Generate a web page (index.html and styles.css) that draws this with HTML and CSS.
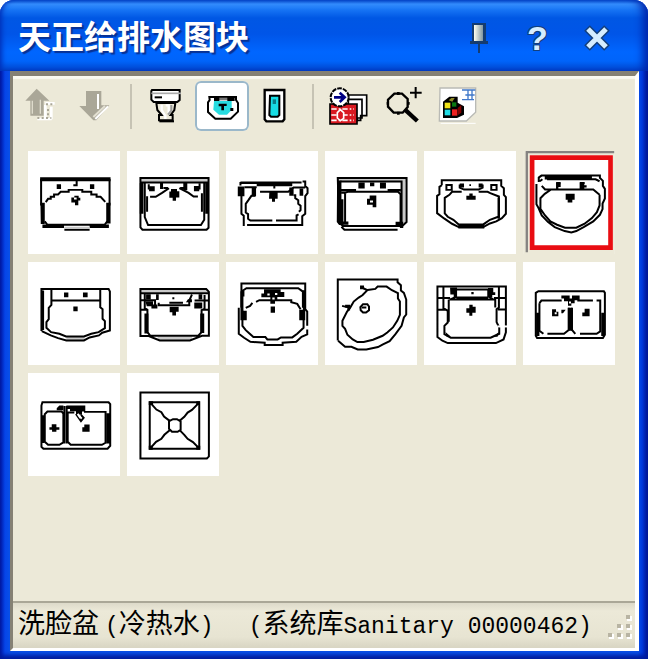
FILE: index.html
```html
<!DOCTYPE html>
<html lang="zh-CN">
<head>
<meta charset="utf-8">
<title>天正给排水图块</title>
<link rel="stylesheet" href="styles.css">
</head>
<body>
<div class="window">
  <header class="titlebar">
    <h1>天正给排水图块</h1>
    <button class="caption" aria-label="固定"><svg width="20" height="32" viewBox="0 0 20 32"><defs><linearGradient id="pin"><stop offset="0" stop-color="#fffff0"/><stop offset="1" stop-color="#8197a2"/></linearGradient></defs><path d="M3 1H17V19H19V22H1V19H3Z" fill="#153c70"/><path d="M5 3H14V19H5Z" fill="url(#pin)"/><path d="M10 22V31" stroke="#153c70" stroke-width="2"/></svg></button>
    <button class="caption help" aria-label="帮助">?</button>
    <button class="caption" aria-label="关闭"><svg width="28" height="28" viewBox="0 0 28 28"><path d="M4 4L24 24M24 4L4 24" stroke="#123f7d" stroke-width="8"/><path d="M5 5L23 23M23 5L5 23" stroke="#d5edff" stroke-width="5"/></svg></button>
  </header>
  <main class="client">
    <div class="toolbar" role="toolbar">
      <button class="tool" aria-label="上移" disabled><svg viewBox="39 243 162 150"><path d="M110 266L148 302H131V347H91V302H76Z" fill="#aaa798"/><path d="M97 302V341M121 299V341" stroke="#dedbcc" stroke-width="4"/><path d="M136 310H164M136 358V315M112 357H155M154 320V358" fill="none" stroke="#fff" stroke-width="8"/><path d="M138 313H160M112 354H154M144 327V354" fill="none" stroke="#aaa798" stroke-width="6" stroke-dasharray="6 7"/></svg></button>
      <button class="tool" aria-label="下移" disabled><svg viewBox="201 243 162 150"><path d="M258 273H304V316H328L289 361H280L238 318H258Z" fill="#aaa798"/><path d="M294 282V327M324 319L286 357" fill="none" stroke="#fff" stroke-width="6"/><path d="M280 351L315 318" stroke="#e3e0d2" stroke-width="6"/></svg></button>
      <span class="separator"></span>
      <button class="tool" aria-label="大便器"><svg viewBox="423 243 162 150"><path d="M456 270H539V300L532 306H461L454 299V273Z" fill="#fff" stroke="#000" stroke-width="6"/><path d="M454 280H543" stroke="#aaa" stroke-width="5"/><path d="M464 292H486" stroke="#000" stroke-width="6"/><path d="M469 309H526L523 330L512 345H518V361H477V345H485L472 330Z" fill="#ece9d8" stroke="#000" stroke-width="6"/><path d="M485 314V330L496 348V357M497 316H506V340" fill="none" stroke="#fff" stroke-width="7"/><path d="M514 315V332L504 344" fill="none" stroke="#999" stroke-width="6"/><path d="M478 364H522" stroke="#000" stroke-width="6"/></svg></button>
      <button class="tool active" aria-label="洗脸盆" aria-pressed="true"><svg viewBox="585 243 162 150"><path d="M628 291H708V300L714 309V335L692 356H646L624 336V307L629 300Z" fill="#fff" stroke="#000" stroke-width="6"/><path d="M642 303H695V330L681 344H657L640 329Z" fill="#28dce0"/><path d="M645 293H690V301H645Z" fill="#777"/><path d="M642 291H658V303H642ZM682 291H704V303H682ZM656 311H680V318H672V331H664V319H656ZM691 324H700V333H691Z"/></svg></button>
      <button class="tool" aria-label="淋浴"><svg viewBox="747 243 162 150"><path d="M794 270H853V358L848 364H799L794 358Z" fill="#fff" stroke="#000" stroke-width="7"/><path d="M810 287H838V345L833 350H813L808 345Z" fill="#17dce3" stroke="#000" stroke-width="6"/><path d="M818 298H828V312H818Z" fill="#087f89"/></svg></button>
      <span class="separator"></span>
      <button class="tool" aria-label="插入图块"><svg viewBox="-3 243 162 150"><path d="M73 285H128V347H110V361H73Z" fill="#fff" stroke="#000" stroke-width="5"/><path d="M75 298H114V354H99V364" fill="none" stroke="#000" stroke-width="5"/><path d="M18 312H99V372H18Z" fill="#d91921" stroke="#000" stroke-width="5"/><path d="M22 327H90M22 345H90M22 361H90" stroke="#fff" stroke-width="5" stroke-dasharray="16 6 5 6"/><path d="M49 329L59 338V355L49 362L40 354V338Z" fill="#d91921" stroke="#fff" stroke-width="5"/><circle cx="47" cy="292" r="27" fill="#fff" stroke="#000" stroke-width="6" stroke-dasharray="14 3"/><path d="M30 292H60M47 278L62 292L47 306" fill="none" stroke="#000084" stroke-width="8"/></svg></button>
      <button class="tool" aria-label="放大"><svg viewBox="159 243 162 150"><path d="M211 281H234L251 297V321L236 338H209L192 320V299Z" fill="none" stroke="#000" stroke-width="7"/><path d="M188 310H194M223 276V285M249 310H257M223 335V344" stroke="#000" stroke-width="8"/><path d="M243 329L280 363" stroke="#000" stroke-width="13"/><path d="M258 278H293M275 261V295" stroke="#000" stroke-width="6"/></svg></button>
      <button class="tool" aria-label="图库管理"><svg viewBox="321 243 162 150"><path d="M348 264H455V337L427 363H346Z" fill="#fff" stroke="#b9bab5" stroke-width="4"/><path d="M357 305L376 290H401V308L420 319V344L399 354H357Z"/><path d="M362 308H379V325H362Z" fill="#efe318"/><path d="M362 329H379V346H362Z" fill="#21dce4"/><path d="M384 328H400V347H384Z" fill="#ed2020"/><path d="M401 324L412 315V338L401 346Z" fill="#800000"/><path d="M374 301L382 294H392L385 305Z" fill="#8c8824"/><path d="M384 307H397V320H384Z" fill="#087812"/><path d="M414 270H454M424 285H452M414 299H450M432 270V299M444 270V299" stroke="#4078c9" stroke-width="4"/><path d="M350 370H455" stroke="#fff" stroke-width="3"/></svg></button>
    </div>

    <div class="blocks">
      <button class="block" aria-label="洗脸盆 1"><svg viewBox="22 16 276 310"><path class="s" d="M58 95H270V107H58ZM59 172H72V236H60ZM257 172H270V234H257ZM65 237H130V248H65ZM207 237H265V248H207ZM108 116H121V130H108ZM208 116H221V130H208ZM165 105H171V122H158V116H165Z"/><path d="M61 100V180M267 100V180M75 170L82 160H90V154H100V147H112L120 139H144V133H185V139H212V147H228V154H240L254 169M72 228L80 238H252L260 228M131 253H207"/><path class="g" d="M131 244H207V250H131Z"/><path class="s" d="M152 156H161V151H174V157H179V165H173V179H163V171H152Z"/><path class="w" d="M160 159H168"/></svg></button>
      <button class="block" aria-label="洗脸盆 2"><svg viewBox="320 16 276 310"><path class="g" d="M358 97H566V109H358Z"/><path d="M360 97H565V247L559 253H366L360 246ZM360 111H565"/><path class="s" d="M358 112H369V205H358ZM555 112H566V205H555ZM386 122H403V137H386ZM419 112H428V130H419ZM489 112H501V134H489ZM521 121H537V137H521ZM452 130H470V137H477V156H467V166H457V157H447V138H452Z"/><path d="M373 112V215L383 239H542L552 223V112M380 152V199M545 143V199M385 116V132M538 113V132M389 154H406L425 142L446 128M477 128L505 142L520 153H533M429 127H443M480 127H494"/></svg></button>
      <button class="block" aria-label="洗脸盆 3"><svg viewBox="18 16 276 310"><path class="s" d="M61 108H245V114H217V122H110V115H61ZM53 123H73V152H53ZM95 127H108V152H95ZM208 126H221V151H208ZM239 129H250V151H239ZM148 139H173V160H165V169H156V160H147Z"/><path d="M61 109V120M64 151V205L71 211V242M81 239H247V212L256 205V152L263 143V128L256 121V108H248M73 125H110M120 139H205L221 126H256M163 118V129M106 151H94L85 164L77 175V201L84 206V220L91 225H157M168 225H230V210L236 207M237 199L242 194V181L235 175V164L226 158V149H221"/></svg></button>
      <button class="block" aria-label="洗脸盆 4"><svg viewBox="316 16 276 310"><path class="g" d="M352 97H562V109H352ZM546 102H558V232H546Z"/><path class="s" d="M352 105H365V161H371V239H358L351 230ZM364 130H409V138H364ZM504 130H544V138H504ZM416 111H435V129H416ZM451 111H464V122H451ZM481 111H499V129H481ZM366 228H386V238H366ZM528 229H551V248H541V240H528Z"/><path d="M354 97H561V230L548 242H370L358 232ZM362 108H546V230L533 240M364 142H376L384 139H535L543 146M365 244L374 253H534M376 145V232M543 145V232"/><path class="s" d="M450 150H470V185H459V178H442V160H450Z"/><path class="w" d="M451 168H460"/></svg></button>
      <button class="block" aria-label="洗脸盆 5"><svg viewBox="12 16 276 310"><path d="M65 119V104H244V121L252 128V148L258 155V205L246 218L229 228L210 234L190 245H116L96 235L72 219L51 203V151L58 146V124L65 119M79 118H95V133H79ZM214 118H230V133H214ZM119 117V126L132 132H176L188 126V117M125 139H96L88 148L74 157V204L83 214L100 223L116 237H190L210 223L237 213V153L211 143L203 139H176"/><path class="s" d="M119 114H132V126H119ZM176 114H188V126H176ZM148 116H153V121H148ZM148 144H158V151H167V163H139V151H148ZM233 157H240V220H233ZM115 236H193V249H115Z"/></svg></button>
      <button class="block selected" aria-label="洗脸盆 00000462" aria-pressed="true"><svg viewBox="310 16 276 310"><path class="pale" d="M310 16H586V326H310Z"/><path class="white" d="M330 28H580V313H330Z"/><path class="frame" d="M337 36H573V307H337Z"/><path class="shade" d="M318 19H584M321 17V321"/><path d="M357 109V96L365 90H541V97L550 106V121L556 130V159L549 174V191L541 208L521 228L492 245L470 257L455 261L435 257L405 245L385 230L366 210L356 187L350 176V115M368 101L360 107M382 101H528L540 107M366 121L376 132H521L540 148M394 132L375 145L362 158V190L376 210L392 228L412 238L436 247H470L495 235L517 218L532 200L540 180V148M410 112H422M481 112H495"/><path class="s" d="M375 91H517V102H375ZM409 110H423V124H416V133H409ZM480 110H494V119H501V126H494V133H480ZM438 145H465V163H458V171H444V163H438Z"/></svg></button>

      <button class="block" aria-label="洗脸盆 7"><svg viewBox="22 13 276 310"><path class="g" d="M137 237H192V248H137Z"/><path d="M62 221V94H264L268 102V219L245 226L235 234L207 240L190 249H137L112 242L90 234L63 221M67 99V218M92 96V142L84 151V185L77 194V211L91 224L116 229L136 237H190L212 229L234 224L253 212V191L246 184V155L239 149V96M92 129H238"/><path class="s" d="M130 105H143V119H130ZM187 105H201V119H187ZM158 147H171V161H158Z"/></svg></button>
      <button class="block" aria-label="洗脸盆 8"><svg viewBox="320 13 276 310"><path class="g" d="M358 94H563V105H358ZM412 237H515V248H412Z"/><path d="M360 94H558L566 103V235H545L509 249H418L385 236H360ZM360 107H564M373 110V152L381 157V224L390 235H534L544 224V158L553 154V112M360 128H404V148M523 129H563M360 157H378M547 157H564M415 136V143H507V129L515 111M447 136H488"/><path class="s" d="M377 110H391V126H377ZM407 110H415V127H407ZM535 110H546V126H535ZM375 131H398V141H411V153H393V146H379ZM522 135H546V153H522ZM448 148H475V163H467V174H456V164H448ZM372 168H384V228H372ZM540 168H552V227H540ZM503 125H515V134H497ZM456 119H462V125H456Z"/></svg></button>
      <button class="block" aria-label="洗脸盆 9"><svg viewBox="18 13 276 310"><path d="M64 150V78H256V155L262 162V205M262 216V231L245 238L229 253L188 256V263H134V256L91 253L72 241L56 229V151M70 117V98L79 92H235L249 102V151M67 160V205L77 218L89 229L100 239H136L142 246H173L183 240H217L232 229L251 211V162M77 151L90 145L97 136M108 133L118 128H214V134L232 139L242 155"/><path class="s" d="M61 101H70V188H61ZM68 160H80V188H68ZM249 98H256V188H238V157H249ZM132 95H182V103H193V118H172V128H165V139H151V119H124V108H132ZM152 147H165V166H152Z"/><path class="w" d="M142 111H149M165 109H172M157 123H164"/></svg></button>
      <button class="block" aria-label="洗脸盆 10"><svg viewBox="316 13 276 310"><path d="M354 249V66H534V74L544 83V99L553 106L560 126V171L553 180L546 205L527 231L510 251L490 261L475 269L440 276H414L395 268H376L355 250M428 113L444 97L467 94L474 87H501L517 98L535 107V123L541 132V172L533 190L520 210L503 225L489 235L460 247L432 254H413L399 246L383 232L376 214L368 205V190L382 162L391 151L402 132L417 120ZM423 88L443 98M367 145L391 151M422 149L430 140H443L448 147V158L439 165H430L423 158Z"/><path class="s" d="M421 84H433V95H421ZM376 142H391V159H383V150H376ZM426 147H440V153H426Z"/></svg></button>
      <button class="block" aria-label="洗脸盆 11"><svg viewBox="12 13 276 310"><path d="M52 90V239L67 250L83 257H228L251 246L258 225V87H52ZM70 90V152L83 160V195L73 205V230L92 241H212L238 229V210L230 194V155L237 150V90M89 126H226V150M86 126V193M53 121H90M222 121H257M55 157H78M234 156H257M108 95V118L89 126M205 95V116L220 126M109 96H204M109 120H204"/><path class="s" d="M90 90H111V121H101V111H91ZM204 91H220V104H226V112H217V120H204ZM148 142H158V148H167V166H157V175H148V166H139V152H148ZM154 103H161V110H154ZM76 224L93 238H80ZM237 224L220 238H233Z"/><path class="w" d="M232 207H264"/></svg></button>
      <button class="block" aria-label="双槽水盆 12"><svg viewBox="310 13 276 310"><path d="M356 101H553L556 106V232L550 242H352L348 235V106ZM359 137L365 129H426M473 129H520M531 129H542V222L531 229H481M467 229L457 217V151M447 151V218L433 229H383M371 229L359 220V137"/><path class="s" d="M349 166H359V236H349ZM545 166H555V236H545ZM425 114H450V123H457V114H480V128H465V137H455V145H445V131H433V123H425ZM445 151H458V220H445ZM397 155H409V163H416V176H397ZM495 154H510V176H488V165H495ZM425 157H438L430 167H425Z"/><path class="w" d="M405 167H411M448 135H454"/></svg></button>

      <button class="block" aria-label="双槽水盆 13"><svg viewBox="22 13 276 310"><path d="M65 101H264L269 107V232L261 241H68L62 235V111ZM72 137L80 129H123L128 135V222L116 229H82L72 220ZM141 132H161M190 130H255V223L244 229H150L141 220V132M131 112V225M138 112V225"/><path class="s" d="M61 140H71V224H61ZM257 134H270V225H257ZM108 119L116 111H128V125H108ZM137 111H194V129H184V139H166V128H148V121H137ZM93 167H107V176H116V184H107V190H94V184H86V176H93ZM191 168H207V190H185V176H191Z"/><path d="M166 136L181 158L189 148L181 139"/><path class="w" d="M171 136L180 149"/></svg></button>
      <button class="block" aria-label="方形地漏 14"><svg viewBox="320 13 276 310"><path d="M360 72H566V264L560 270H360ZM388 101H537V241H388ZM390 103L408 123L423 131L431 144L448 157M536 103L515 124L502 132L492 145L478 157M390 239L407 220L423 211L432 199L448 185M536 239L518 221L502 211L492 199L478 185M448 157L458 152H470L481 159V184L472 190H455L446 181V157"/><path class="s" d="M385 98H398V109H385ZM528 98H539V109H528ZM385 232H397V244H385ZM528 232H540V244H528Z"/></svg></button>
    </div>
    <footer class="status">
      <div class="description"><span>洗脸盆</span><span class="detail"><span class="latin">(</span>冷热水<span class="latin">)</span></span><span class="library"><span class="latin">(</span>系统库<span class="latin">Sanitary 00000462)</span></span></div>
      <svg class="grip" width="26" height="28" viewBox="0 0 26 28"><path d="M20 4H25V9H20ZM11 13H16V18H11ZM20 13H25V18H20ZM2 22H7V27H2ZM11 22H16V27H11ZM20 22H25V27H20Z" fill="#fff"/><path d="M19 3H23V7H19ZM10 12H14V16H10ZM19 12H23V16H19ZM1 21H5V25H1ZM10 21H14V25H10ZM19 21H23V25H19Z" fill="#b8b4a3"/></svg>
    </footer>
  </main>
</div>
</body>
</html>
```
FILE: styles.css
```css
* { box-sizing: border-box; }
body { margin: 0; background: #fff; font-family: "Liberation Sans", "Noto Sans CJK SC", sans-serif; }
button { padding: 0; border: 0; background: none; color: inherit; font: inherit; }
svg { display: block; }

.window {
  display: flex;
  flex-direction: column;
  min-height: 100vh;
  padding: 0 9px 8px 10px;
  border-radius: 14px 14px 0 0;
  background: linear-gradient(90deg, #0018a8 0, #0645e8 5px, #0850e8 10px, #0850e8 calc(100% - 10px), #0038dc calc(100% - 6px), #00118c 100%);
  box-shadow: inset 0 -4px 4px #001b9c;
}
.titlebar {
  display: flex;
  align-items: center;
  height: 71px;
  margin: 0 -9px 0 -10px;
  padding: 4px 22px 0 18px;
  border-radius: 14px 14px 0 0;
  background: linear-gradient(180deg, #0754d4 0, #3590ff 4px, #1673f4 10px, #0057e4 18px, #0055e8 34px, #0066ff 52px, #0064fa 61px, #0046cc 71px);
  box-shadow: inset 4px 0 5px -2px #0030b8, inset -8px 0 8px -3px #0024a8;
  color: #fff;
}
h1 {
  flex: 1;
  margin: 0;
  font-size: 33px;
  line-height: 40px;
  font-weight: 700;
  white-space: nowrap;
  text-shadow: 2px 2px 1px #073194;
}
.caption { display: grid; place-items: center; width: 59px; height: 44px; }
.help {
  color: #d5edff;
  font-size: 34px;
  line-height: 40px;
  font-weight: 700;
  text-shadow: 1px 1px #123f7d, -1px -1px #123f7d, 1px -1px #123f7d, -1px 1px #123f7d;
}
.client {
  display: flex;
  flex: 1;
  flex-direction: column;
  border-style: solid;
  border-width: 5px 4px 3px 3px;
  border-color: #858174 #fff #fff #858174;
  background: #ece9d8;
}
.toolbar {
  display: flex;
  height: 63px;
  padding-top: 5px;
  box-shadow: inset 0 3px 1px #faf9f1;
}
.tool { width: 54px; height: 50px; border-radius: 6px; }
.tool svg { width: 54px; height: 50px; }
.active { background: #fff; box-shadow: inset 0 0 0 2px #9bb8ca; }
.separator { width: 20px; height: 45px; margin-top: 3px; background: linear-gradient(#c6c3b4, #c6c3b4) center / 2px 100% no-repeat; }
.blocks {
  display: grid;
  flex: 1;
  grid-template-columns: repeat(auto-fill, 92px);
  grid-auto-rows: 103px;
  align-content: start;
  gap: 8px 7px;
  padding: 12px 15px;
}
.block { background: #fff; }
.block svg { width: 92px; height: 103px; }
.block path { fill: none; stroke: #000; stroke-width: 6; }
.block .s { fill: #000; stroke: none; }
.block .g { fill: #c9c9c9; stroke: none; }
.block .w { stroke: #fff; }
.block .white { fill: #fff; stroke: none; }
.block .pale { fill: #ece9d8; stroke: none; }
.block .frame { stroke: #e90d12; stroke-width: 14; }
.block .shade { stroke: #858381; stroke-width: 7; }
.status {
  display: flex;
  align-items: center;
  height: 47px;
  padding: 0 2px 0 5px;
  border-top: 2px solid #aaa797;
  background: linear-gradient(#dddaca, #ece9d8 8px, #e7e4d2 34px, #d8d5c3);
}
.description {
  display: flex;
  flex: 1;
  min-width: 0;
  overflow: hidden;
  margin-right: 16px;
  font-size: 27px;
  line-height: 36px;
  white-space: nowrap;
}
.detail { margin-left: 6px; }
.library { margin-left: 35px; }
.latin { font-family: "Liberation Mono", monospace; font-size: 23px; }
.grip { flex: none; }
```
